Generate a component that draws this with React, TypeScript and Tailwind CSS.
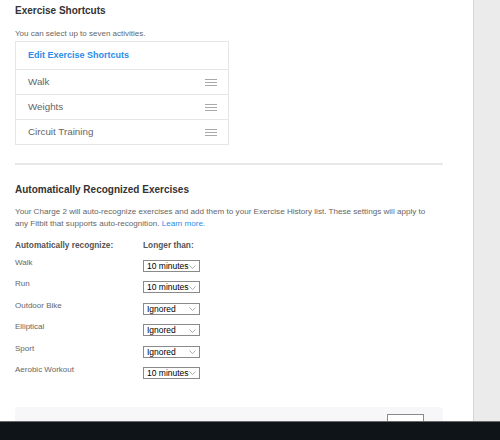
import React from "react";

const shortcuts = ["Walk", "Weights", "Circuit Training"];
const rows: [string, string][] = [
  ["Walk", "10 minutes"],
  ["Run", "10 minutes"],
  ["Outdoor Bike", "Ignored"],
  ["Elliptical", "Ignored"],
  ["Sport", "Ignored"],
  ["Aerobic Workout", "10 minutes"],
];

function Burger() {
  return (
    <div className="flex w-[12px] flex-col gap-[2px]">
      <div className="h-[1px] bg-[#a8a8a8]" />
      <div className="h-[1px] bg-[#a8a8a8]" />
      <div className="h-[1px] bg-[#a8a8a8]" />
    </div>
  );
}

function Select({ value }: { value: string }) {
  return (
    <div className="flex h-[12px] w-[57px] items-center justify-between border border-[#8a8a8a] bg-white pl-[3px] pr-[3px]">
      <span className="whitespace-nowrap text-[8.5px] leading-[10px] text-black">{value}</span>
      <svg width="7" height="4" viewBox="0 0 7 4" className="mt-[1px] shrink-0">
        <path d="M0.5 0.5 L3.5 3.5 L6.5 0.5" fill="none" stroke="#999" strokeWidth="0.8" />
      </svg>
    </div>
  );
}

export default function App() {
  return (
    <div className="flex h-[440px] w-[500px] flex-col overflow-hidden bg-white font-['Liberation_Sans',Arial,sans-serif]">
      <div className="flex min-h-0 flex-1">
        <main className="flex w-[473px] flex-col pl-[15px] pt-[3px]">
          <h2 className="text-[10px] font-bold leading-[16px] text-[#333]">Exercise Shortcuts</h2>
          <p className="mt-[9px] text-[8px] leading-[11px] text-[#666]">You can select up to seven activities.</p>
          <div className="mt-[2px] w-[214px] border border-[#e6e6e6]">
            <div className="flex h-[27px] items-center pl-[12px] text-[9px] font-bold text-[#2a8cea]">
              Edit Exercise Shortcuts
            </div>
            {shortcuts.map((s) => (
              <div key={s} className="flex h-[25px] items-center justify-between border-t border-[#e6e6e6] pl-[12px] pr-[11px]">
                <span className="text-[9.8px] text-[#666]">{s}</span>
                <Burger />
              </div>
            ))}
          </div>
          <div className="mt-[18px] h-[2px] w-[428px] bg-[#e8e8e8]" />
          <h2 className="mt-[17px] text-[10px] font-bold leading-[16px] text-[#333]">Automatically Recognized Exercises</h2>
          <p className="mt-[8px] w-[422px] text-[8.1px] leading-[12px] text-[#666]">
            Your Charge 2 will auto-recognize exercises and add them to your Exercise History list. These settings will apply to any Fitbit that supports auto-recognition.{" "}
            <span className="text-[#2a8cea]">Learn more.</span>
          </p>
          <div className="mt-[9px] flex h-[12px] items-center text-[8.3px] font-bold text-[#555]">
            <span className="w-[128px]">Automatically recognize:</span>
            <span>Longer than:</span>
          </div>
          <div className="mt-[7px] flex flex-col">
            {rows.map(([label, val]) => (
              <div key={label} className="flex h-[21.4px] items-start">
                <span className="w-[128px] text-[8px] leading-[10px] text-[#666]">{label}</span>
                <div className="mt-[2px]">
                  <Select value={val} />
                </div>
              </div>
            ))}
          </div>
          <div className="mt-auto flex h-[14px] w-[428px] items-start justify-end overflow-hidden rounded-t-[4px] bg-[#f7f7fa] pr-[19px] pt-[7px]">
            <div className="h-[7px] w-[37px] overflow-hidden border border-b-0 border-[#8a8a8a] bg-white" />
          </div>
        </main>
        <div className="flex-1 border-l border-[#d6d6d6] bg-[#ebebeb]" />
      </div>
      <div className="h-[19px] border-t border-[#6a6a6a] bg-[#0e1418]" />
    </div>
  );
}
